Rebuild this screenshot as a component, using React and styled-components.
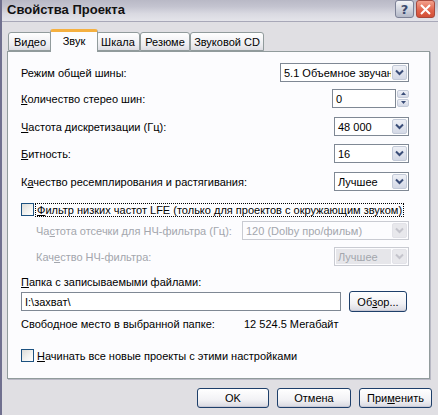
import React from "react";
import styled, { createGlobalStyle } from "styled-components";

const GlobalStyle = createGlobalStyle`
  html, body {
    margin: 0;
    padding: 0;
    background: #e0dfe3;
  }
  body {
    font-family: "Liberation Sans", "DejaVu Sans", sans-serif;
    font-size: 11px;
    color: #000;
  }
`;

const Window = styled.div`
  width: 438px;
  height: 415px;
  overflow: hidden;
  background: #e0dfe3;
  border-left: 2px solid #70708f;
  box-sizing: border-box;
  display: flex;
  flex-direction: column;
`;

const TitleBar = styled.div`
  height: 21px;
  display: flex;
  align-items: center;
  justify-content: space-between;
  padding: 0 3px;
  background: linear-gradient(
    to bottom,
    #b9b9c6 0%,
    #c3c3cf 30%,
    #d9d9e1 65%,
    #e4e4ea 100%
  );
  border-bottom: 1px solid #a8a8b8;
`;

const Title = styled.span`
  font-family: "Liberation Sans", sans-serif;
  font-weight: bold;
  font-size: 13px;
  color: #111;
  padding-left: 2px;
  margin-top: -2px;
`;

const TitleButtons = styled.div`
  display: flex;
  gap: 2px;
  margin-top: -3px;
`;

const CaptionButton = styled.div`
  width: 19px;
  height: 18px;
  border-radius: 3px;
  box-sizing: border-box;
  display: flex;
  align-items: center;
  justify-content: center;
  border: 1px solid ${(p) => (p.$close ? "#a8483c" : "#7c8196")};
  background: ${(p) =>
    p.$close
      ? "linear-gradient(to bottom, #f3a08c, #e0624a 60%, #d25038)"
      : "linear-gradient(to bottom, #f4f5f8, #c6cad6 70%, #b4b9c8)"};
  color: ${(p) => (p.$close ? "#fff" : "#3b4a6e")};
  font-family: "DejaVu Sans", sans-serif;
  font-weight: bold;
  font-size: 13px;
`;

const Body = styled.div`
  flex: 1;
  padding: 7px 6px 0 5px;
  display: flex;
  flex-direction: column;
`;

const TabStrip = styled.div`
  display: flex;
  align-items: flex-end;
  height: 22px;
  padding-left: 1px;
  position: relative;
  z-index: 1;
`;

const Tab = styled.div`
  box-sizing: border-box;
  height: ${(p) => (p.$active ? "23px" : "19px")};
  margin-bottom: ${(p) => (p.$active ? "-1px" : "0")};
  margin-left: ${(p) => (p.$active ? "-2px" : "0")};
  margin-right: ${(p) => (p.$active ? "-2px" : "0")};
  padding-top: 3px;
  border: 1px solid #919b9c;
  border-bottom: ${(p) => (p.$active ? "none" : "1px solid #919b9c")};
  border-top: ${(p) =>
    p.$active ? "3px solid #f5b040" : "1px solid #919b9c"};
  border-radius: 3px 3px 0 0;
  background: ${(p) =>
    p.$active
      ? "#fcfcfe"
      : "linear-gradient(to bottom, #ffffff, #ececf0 70%, #dcdce2)"};
  position: relative;
  z-index: ${(p) => (p.$active ? 2 : 1)};
  font-size: 11px;
  white-space: nowrap;
  width: ${(p) => p.$w}px;
  text-align: center;
`;

const Panel = styled.div`
  box-sizing: border-box;
  width: 423px;
  height: 328px;
  background: #fcfcfe;
  border: 1px solid #919b9c;
  box-shadow: 1px 1px 0 #b8b8c4;
  padding: 10px 20px 0 13px;
  display: flex;
  flex-direction: column;
`;

const Row = styled.div`
  display: flex;
  align-items: center;
  justify-content: space-between;
  height: ${(p) => p.$h || 19}px;
  margin-top: ${(p) => p.$mt || 0}px;
  padding-left: ${(p) => p.$indent || 0}px;
`;

const Label = styled.span`
  color: ${(p) => (p.$disabled ? "#a3a6ad" : "#000")};
  font-size: 11px;
  white-space: nowrap;
`;

const Combo = styled.div`
  box-sizing: border-box;
  width: ${(p) => p.$w}px;
  height: ${(p) => p.$h || 19}px;
  border: 1px solid ${(p) => (p.$disabled ? "#c9cbd2" : "#7f8894")};
  background: ${(p) => (p.$disabled ? "#fcfcfe" : "#fff")};
  display: flex;
  align-items: center;
  padding: 1px;
  gap: 1px;
`;

const ComboText = styled.div`
  flex: 1;
  height: 100%;
  display: flex;
  align-items: center;
  padding-left: 2px;
  overflow: hidden;
  white-space: nowrap;
  font-size: 11px;
  color: ${(p) => (p.$disabled ? "#a3a6ad" : "#000")};
  background: ${(p) => (p.$filled ? "#e6e6ea" : "transparent")};
`;

const DropButton = styled.div`
  width: 15px;
  height: 100%;
  flex-shrink: 0;
  box-sizing: border-box;
  border: 1px solid ${(p) => (p.$disabled ? "#e2e2e8" : "#c3cad8")};
  border-radius: 2px;
  background: ${(p) =>
    p.$disabled
      ? "#e8e8ec"
      : "linear-gradient(to bottom, #eef0f6, #d4d9e6)"};
  display: flex;
  align-items: center;
  justify-content: center;
`;

const Spin = styled.div`
  display: flex;
  align-items: center;
  gap: 1px;
`;

const EditBox = styled.div`
  box-sizing: border-box;
  width: ${(p) => p.$w}px;
  height: 19px;
  border: 1px solid #7f8894;
  background: #fff;
  padding-left: 3px;
  display: flex;
  align-items: center;
  font-size: 11px;
  flex: ${(p) => (p.$grow ? 1 : "none")};
`;

const SpinButtons = styled.div`
  display: flex;
  flex-direction: column;
  gap: 1px;
  height: 18px;
`;

const SpinButton = styled.div`
  width: 12px;
  height: 8px;
  box-sizing: border-box;
  border: 1px solid #c3cad8;
  border-radius: 2px;
  background: linear-gradient(to bottom, #eef0f6, #d4d9e6);
  display: flex;
  align-items: center;
  justify-content: center;
`;

const CheckRow = styled.div`
  display: flex;
  align-items: center;
  gap: 2px;
  margin-top: ${(p) => p.$mt || 0}px;
  height: 15px;
`;

const CheckBox = styled.div`
  width: 13px;
  height: 13px;
  flex-shrink: 0;
  box-sizing: border-box;
  border: 1px solid #1c5180;
  background: linear-gradient(135deg, #dcdcd8 0%, #f4f4f2 60%, #ffffff 100%);
`;

const CheckLabel = styled.span`
  font-size: 11px;
  padding: 0 1px;
  white-space: nowrap;
  outline: ${(p) => (p.$focus ? "1px dotted #000" : "none")};
`;

const FolderRow = styled.div`
  display: flex;
  align-items: center;
  gap: 8px;
  margin-top: 2px;
  padding-right: 2px;
`;

const Button = styled.div`
  box-sizing: border-box;
  width: ${(p) => p.$w}px;
  height: ${(p) => p.$h || 21}px;
  border: 1px solid #1e3f6a;
  border-radius: 3px;
  background: linear-gradient(to bottom, #ffffff, #f2f2f5 60%, #d8d8e0);
  box-shadow: inset 0 -1px 0 #c8c8d4;
  display: flex;
  align-items: center;
  justify-content: center;
  font-size: 11px;
`;

const InfoRow = styled.div`
  display: flex;
  margin-top: 5px;
  font-size: 11px;
  height: 14px;
  align-items: center;
`;

const InfoLabel = styled.span`
  width: 223px;
`;

const Footer = styled.div`
  display: flex;
  justify-content: flex-end;
  gap: 8px;
  padding: 9px 0 0 0;
`;

const Chevron = ({ disabled }) => (
  <svg width="9" height="7" viewBox="0 0 9 7">
    <path
      d="M1 1.5 L4.5 5 L8 1.5"
      fill="none"
      stroke={disabled ? "#c4c4cc" : "#3a4d78"}
      strokeWidth="2"
    />
  </svg>
);

const SpinArrow = ({ up }) => (
  <svg width="5" height="3" viewBox="0 0 5 3">
    <path d={up ? "M0 3 L2.5 0 L5 3 Z" : "M0 0 L2.5 3 L5 0 Z"} fill="#3a4d78" />
  </svg>
);

const Dropdown = ({ w, h, value, disabled, filled }) => (
  <Combo $w={w} $h={h} $disabled={disabled}>
    <ComboText $disabled={disabled} $filled={filled}>
      {value}
    </ComboText>
    <DropButton $disabled={disabled}>
      <Chevron disabled={disabled} />
    </DropButton>
  </Combo>
);

const tabs = [
  { name: "Видео", w: 44 },
  { name: "Звук", w: 48, active: true },
  { name: "Шкала", w: 44 },
  { name: "Резюме", w: 50 },
  { name: "Звуковой CD", w: 74 },
];

export default function App() {
  return (
    <>
      <GlobalStyle />
      <Window>
        <TitleBar>
          <Title>Свойства Проекта</Title>
          <TitleButtons>
            <CaptionButton>?</CaptionButton>
            <CaptionButton $close>
              <svg width="11" height="11" viewBox="0 0 11 11">
                <path
                  d="M1 1 L10 10 M10 1 L1 10"
                  stroke="#fff"
                  strokeWidth="2"
                />
              </svg>
            </CaptionButton>
          </TitleButtons>
        </TitleBar>
        <Body>
          <TabStrip>
            {tabs.map((t) => (
              <Tab key={t.name} $active={t.active} $w={t.w}>
                {t.name}
              </Tab>
            ))}
          </TabStrip>
          <Panel>
            <Row $mt={1}>
              <Label>Режим общей шины:</Label>
              <Dropdown w={129} value="5.1 Объемное звучание" />
            </Row>
            <Row $mt={7}>
              <Label>
                <u>К</u>оличество стерео шин:
              </Label>
              <Spin>
                <EditBox $w={64}>0</EditBox>
                <SpinButtons>
                  <SpinButton>
                    <SpinArrow up />
                  </SpinButton>
                  <SpinButton>
                    <SpinArrow />
                  </SpinButton>
                </SpinButtons>
              </Spin>
            </Row>
            <Row $mt={9}>
              <Label>
                <u>Ч</u>астота дискретизации (Гц):
              </Label>
              <Dropdown w={75} value="48 000" />
            </Row>
            <Row $mt={8}>
              <Label>
                <u>Б</u>итность:
              </Label>
              <Dropdown w={75} value="16" />
            </Row>
            <Row $mt={9}>
              <Label>
                К<u>а</u>чество ресемплирования и растягивания:
              </Label>
              <Dropdown w={75} value="Лучшее" />
            </Row>
            <CheckRow $mt={11}>
              <CheckBox />
              <CheckLabel $focus>
                <u>Ф</u>ильтр низких частот LFE (только для проектов с
                окружающим звуком)
              </CheckLabel>
            </CheckRow>
            <Row $mt={4} $indent={15}>
              <Label $disabled>
                Ча<u>с</u>тота отсечки для НЧ-фильтра (Гц):
              </Label>
              <Dropdown w={167} value="120 (Dolby про/фильм)" disabled />
            </Row>
            <Row $mt={7} $indent={15}>
              <Label $disabled>
                Кач<u>е</u>ство НЧ-фильтра:
              </Label>
              <Dropdown w={75} value="Лучшее" disabled filled />
            </Row>
            <Row $mt={9} $h={14}>
              <Label>
                <u>П</u>апка с записываемыми файлами:
              </Label>
            </Row>
            <FolderRow>
              <EditBox $grow>I:\захват\</EditBox>
              <Button $w={58}>
                Об<u>з</u>ор...
              </Button>
            </FolderRow>
            <InfoRow>
              <InfoLabel>Свободное место в выбранной папке:</InfoLabel>
              <span>12 524.5 Мегабайт</span>
            </InfoRow>
            <CheckRow $mt={17}>
              <CheckBox />
              <CheckLabel>
                <u>Н</u>ачинать все новые проекты с этими настройками
              </CheckLabel>
            </CheckRow>
          </Panel>
          <Footer>
            <Button $w={72} $h={20}>OK</Button>
            <Button $w={74} $h={20}>Отмена</Button>
            <Button $w={73} $h={20}>
              При<u>м</u>енить
            </Button>
          </Footer>
        </Body>
      </Window>
    </>
  );
}
